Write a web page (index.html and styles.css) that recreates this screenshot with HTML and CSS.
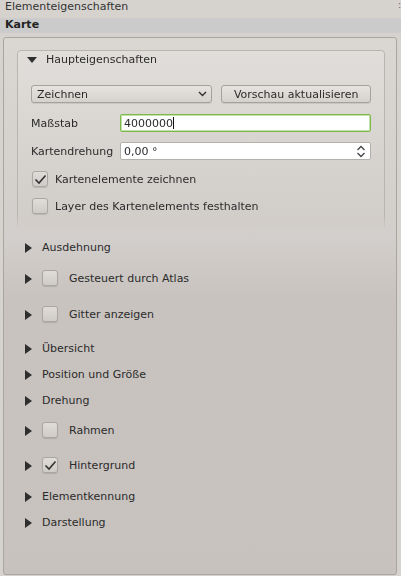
FILE: index.html
```html
<!DOCTYPE html>
<html lang="de">
<head>
<meta charset="utf-8">
<link rel="stylesheet" href="styles.css">
</head>
<body>
<div class="titlebar"><span>Elementeigenschaften</span><span class="grip">:</span></div>
<div class="itemhead">Karte</div>
<div class="panel">
  <div class="group">
    <div class="ghead"><span class="tri-down"></span><span>Haupteigenschaften</span></div>
    <div class="row-controls">
      <div class="combo"><span>Zeichnen</span><svg class="chev" width="9" height="6" viewBox="0 0 9 6"><path d="M1 1 L4.5 4.5 L8 1" fill="none" stroke="#333" stroke-width="1.4"/></svg></div>
      <div class="button">Vorschau aktualisieren</div>
    </div>
    <div class="field">
      <span class="flabel">Maßstab</span>
      <div class="input focus"><span>4000000</span><span class="caret"></span></div>
    </div>
    <div class="field">
      <span class="flabel">Kartendrehung</span>
      <div class="input spin"><span>0,00 °</span><svg width="10" height="13" viewBox="0 0 10 13"><path d="M1.5 5 L5 1.5 L8.5 5 M1.5 8 L5 11.5 L8.5 8" fill="none" stroke="#444" stroke-width="1.3"/></svg></div>
    </div>
    <div class="check"><span class="box checked"><svg width="13" height="11" viewBox="0 0 13 11"><path d="M1.5 5.5 L5 9 L11.5 1.5" fill="none" stroke="#333" stroke-width="1.6"/></svg></span><span>Kartenelemente zeichnen</span></div>
    <div class="check"><span class="box"></span><span>Layer des Kartenelements festhalten</span></div>
  </div>
  <div class="list">
    <div class="item"><span class="tri"></span><span>Ausdehnung</span></div>
    <div class="item cb"><span class="tri"></span><span class="box"></span><span class="cblabel">Gesteuert durch Atlas</span></div>
    <div class="item cb"><span class="tri"></span><span class="box"></span><span class="cblabel">Gitter anzeigen</span></div>
    <div class="item after-cb"><span class="tri"></span><span>Übersicht</span></div>
    <div class="item"><span class="tri"></span><span>Position und Größe</span></div>
    <div class="item"><span class="tri"></span><span>Drehung</span></div>
    <div class="item cb short"><span class="tri"></span><span class="box"></span><span class="cblabel">Rahmen</span></div>
    <div class="item cb"><span class="tri"></span><span class="box checked"><svg width="13" height="11" viewBox="0 0 13 11"><path d="M1.5 5.5 L5 9 L11.5 1.5" fill="none" stroke="#333" stroke-width="1.6"/></svg></span><span class="cblabel">Hintergrund</span></div>
    <div class="item"><span class="tri"></span><span>Elementkennung</span></div>
    <div class="item"><span class="tri"></span><span>Darstellung</span></div>
  </div>
</div>
</body>
</html>
```
FILE: styles.css
```css
* { box-sizing: border-box; }
html, body { margin: 0; padding: 0; }
body {
  width: 401px;
  height: 576px;
  overflow: hidden;
  background: #d6d3cf;
  font-family: "DejaVu Sans", sans-serif;
  font-size: 11px;
  color: #2b2b2b;
  display: flex;
  flex-direction: column;
}
.titlebar {
  height: 18px;
  padding: 0 0 0 5px;
  line-height: 13px;
  display: flex;
  justify-content: space-between;
  color: #333;
}
.grip { color: #666; font-size: 9px; line-height: 10px; }
.itemhead {
  height: 15px;
  background: #cbcbcb;
  font-weight: bold;
  padding-left: 5px;
  line-height: 14px;
  color: #222;
}
.panel {
  margin: 4px 4px 1px 3px;
  flex: 1;
  border: 1px solid #a9a5a1;
  border-radius: 3px;
  background: linear-gradient(#dad7d3 0px, #d2cecb 200px, #c8c3bf 260px, #c7c2be 100%);
  padding: 12px 11px 0 13px;
  display: flex;
  flex-direction: column;
}
.group {
  border: 1px solid #b8b4b0;
  border-bottom: none;
  border-radius: 4px 4px 0 0;
  background: linear-gradient(#e0ddda, #d0ccc8);
  padding: 0 13px 0 13px;
  height: 178px;
  display: flex;
  flex-direction: column;
  -webkit-mask-image: linear-gradient(#000 164px, rgba(0,0,0,0) 180px);
  mask-image: linear-gradient(#000 164px, rgba(0,0,0,0) 180px);
}
.ghead {
  height: 16px;
  display: flex;
  align-items: center;
  margin: 0 -8px 0 -8px;
}
.tri-down {
  width: 0; height: 0;
  border-left: 5px solid transparent;
  border-right: 5px solid transparent;
  border-top: 6px solid #2e2e2e;
  margin: 1px 9px 0 4px;
}
.row-controls {
  margin-top: 18px;
  height: 18px;
  display: flex;
  gap: 9px;
}
.combo, .button {
  height: 18px;
  border: 1px solid #a5a19d;
  border-radius: 3px;
  background: linear-gradient(#e6e3e0, #d5d1cd);
  display: flex;
  align-items: center;
  box-shadow: 0 1px 0 rgba(0,0,0,0.08);
}
.combo {
  width: 182px;
  padding: 0 4px 0 5px;
  justify-content: space-between;
}
.button {
  width: 150px;
  justify-content: center;
}
.field {
  display: flex;
  align-items: center;
  height: 18px;
  margin-top: 11px;
}
.field + .field { margin-top: 10px; }
.flabel { width: 89px; }
.input {
  width: 251px;
  height: 18px;
  background: #fff;
  border: 1px solid #b4b0ac;
  border-radius: 2px;
  display: flex;
  align-items: center;
  padding-left: 3px;
}
.input.focus {
  border: 1px solid #7cba4c;
  box-shadow: inset 0 0 0 1px #c2e0a8;
}
.caret { width: 1px; height: 12px; background: #111; }
.input.spin { justify-content: space-between; padding-right: 4px; }
.check {
  display: flex;
  align-items: center;
  gap: 7px;
  height: 16px;
  margin-top: 11px;
  padding-left: 1px;
}
.check + .check { margin-top: 11px; }
.box {
  width: 16px;
  height: 16px;
  flex: none;
  border: 1px solid #aaa6a2;
  border-radius: 3px;
  background: linear-gradient(#dfdcd9, #cfcbc7);
  box-shadow: 0 1px 1px rgba(0,0,0,0.12);
  display: flex;
  align-items: center;
  justify-content: center;
}
.list {
  display: flex;
  flex-direction: column;
  padding-top: 6px;
}
.item {
  height: 26px;
  display: flex;
  align-items: center;
  padding-left: 8px;
}
.item.cb { height: 36px; }
.item.cb.short { height: 34px; }
.item.after-cb { margin-top: 3px; }
.tri {
  width: 0; height: 0;
  border-top: 5px solid transparent;
  border-bottom: 5px solid transparent;
  border-left: 7px solid #2e2e2e;
  margin: 2px 10px 0 0;
}
.item.cb .box { margin-right: 11px; }
```
